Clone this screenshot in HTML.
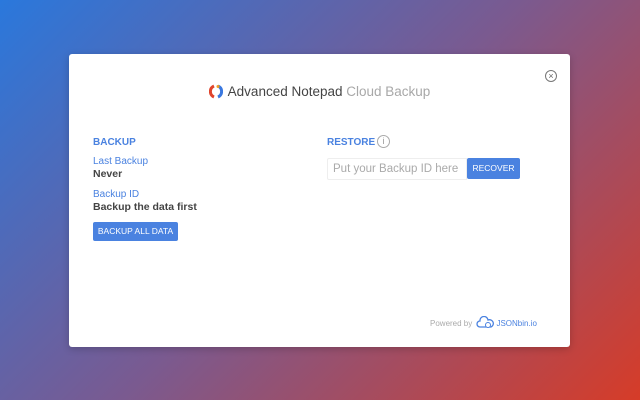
<!DOCTYPE html>
<html><head><meta charset="utf-8"><style>
*{margin:0;padding:0;box-sizing:border-box}
body{width:640px;height:400px;overflow:hidden;font-family:"Liberation Sans",Arial,sans-serif;background:linear-gradient(135deg,#2a78dc 0%,#7a5a90 50%,#d63c28 100%);position:relative}
.card{position:absolute;left:69px;top:54px;width:501px;height:293px;background:#fff;border-radius:3px;box-shadow:0 2px 8px rgba(0,0,0,.2)}
.title{position:absolute;left:0;width:100%;top:30px;text-align:center;font-size:13.5px;color:#444;white-space:nowrap}
.title span{color:#a8a8a8}
.logo{display:inline-block;vertical-align:-3px;margin-right:5px}
.close{position:absolute;left:476px;top:16px;width:12px;height:12px;border:1px solid #777;border-radius:50%;font-size:9px;line-height:10px;text-align:center;color:#666}
.h{position:absolute;font-size:10px;font-weight:bold;color:#4a82e0}
.l{position:absolute;font-size:10px;color:#4a82e0}
.v{position:absolute;font-size:10.5px;font-weight:bold;color:#444}
.btn{position:absolute;background:#4a82e0;color:#fff;font-size:8.5px;border-radius:2px;text-align:center;white-space:nowrap}
.inp{position:absolute;left:258px;top:104px;width:140px;height:22px;border:1px solid #eee;border-radius:2px 0 0 2px;font-size:11.5px;color:#aaa;padding:4px 5px;white-space:nowrap;overflow:hidden}
.info{position:absolute;left:308px;top:81px;width:13px;height:13px;border:1px solid #aaa;border-radius:50%;font-size:9px;color:#999;text-align:center;line-height:11px}
.pw{position:absolute;left:361px;top:262px;font-size:8px;color:#aaa;white-space:nowrap}
.pw b{font-weight:normal;color:#4a82e0}
</style></head><body>
<div class="card">
<div class="title"><svg class="logo" width="14" height="15" viewBox="0 0 14 15"><path d="M5 2 A6 6 0 0 0 5 13" stroke="#e0442c" stroke-width="3" fill="none"/><path d="M9 2 A6 6 0 0 1 9 13" stroke="#3a78e0" stroke-width="3" fill="none"/><circle cx="9" cy="2.5" r="1.5" fill="#f0a020"/></svg>Advanced Notepad <span>Cloud Backup</span></div>
<div class="close">×</div>
<div class="h" style="left:24px;top:83px">BACKUP</div>
<div class="l" style="left:24px;top:102px">Last Backup</div>
<div class="v" style="left:24px;top:114px">Never</div>
<div class="l" style="left:24px;top:135px">Backup ID</div>
<div class="v" style="left:24px;top:147px">Backup the data first</div>
<div class="btn" style="left:24px;top:168px;width:85px;height:19px;line-height:19px">BACKUP ALL DATA</div>
<div class="h" style="left:258px;top:83px">RESTORE</div>
<div class="info">i</div>
<div class="inp">Put your Backup ID here</div>
<div class="btn" style="left:398px;top:104px;width:53px;height:21px;line-height:21px">RECOVER</div>
<div class="pw">Powered by <svg width="18" height="13" viewBox="0 0 18 13" style="vertical-align:-3px;margin:0 2px"><path d="M4 11 A3 3 0 0 1 4 5 A4 4 0 0 1 12 4 A3 3 0 0 1 15 11 Z" fill="none" stroke="#4a82e0" stroke-width="1.3"/><circle cx="12" cy="9" r="2.5" fill="#fff" stroke="#4a82e0"/></svg><b>JSONbin.io</b></div>
</div>
</body></html>
